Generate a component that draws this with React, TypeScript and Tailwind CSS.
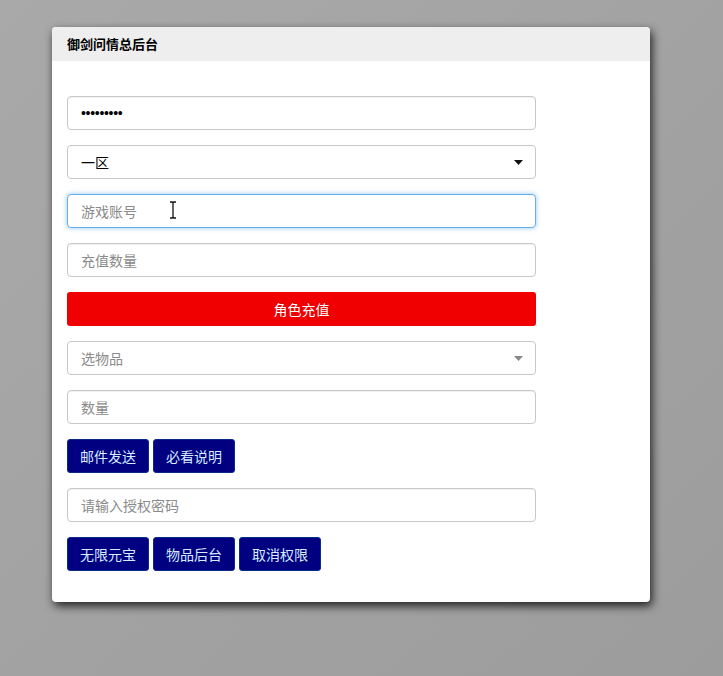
import React from 'react';

const font = { fontFamily: '"Noto Sans CJK SC", "Noto Sans", sans-serif' };

function Field({ placeholder, value, focused }: { placeholder?: string; value?: string; focused?: boolean }) {
  return (
    <div
      className={
        'h-[34px] w-full rounded-[4px] border bg-white px-[13px] flex items-center text-[14px] ' +
        (focused
          ? 'border-[#66afe9] shadow-[0_0_5px_rgba(102,175,233,0.7)]'
          : 'border-[#c8c8c8] shadow-[inset_0_1px_1px_rgba(0,0,0,0.06)]')
      }
    >
      {value ? (
        <span className="text-black font-['Liberation_Sans'] text-[14px] tracking-[-0.3px]">{value}</span>
      ) : (
        <span className="text-[#8a8a8a]">{placeholder}</span>
      )}
    </div>
  );
}

function Select({ label, muted }: { label: string; muted?: boolean }) {
  return (
    <div className="h-[34px] w-full rounded-[4px] border border-[#c8c8c8] bg-white pl-[13px] pr-[12px] flex items-center justify-between text-[14px]">
      <span className={muted ? 'text-[#8a8a8a]' : 'text-black'}>{label}</span>
      <svg width="9" height="5" viewBox="0 0 9 5">
        <path d="M0 0h9L4.5 5z" fill={muted ? '#888' : '#111'} />
      </svg>
    </div>
  );
}

function NavyButton({ children }: { children: React.ReactNode }) {
  return (
    <button className="h-[34px] w-[82px] rounded-[3px] border border-[#0a2a8a] bg-[#000080] text-[14px] text-[#d6ecff]">
      {children}
    </button>
  );
}

export default function App() {
  return (
    <div
      className="min-h-[676px] w-full bg-gradient-to-br from-[#a9a9a9] to-[#9c9c9c] pl-[52px] pt-[27px] pb-[74px]"
      style={font}
    >
      <div className="w-[598px] overflow-hidden rounded-[4px] bg-white shadow-[2px_4px_10px_rgba(0,0,0,0.8)]">
        <div className="h-[34px] bg-[#eeeeee] px-[15px] flex items-center">
          <span className="text-[13px] font-bold text-black">御剑问情总后台</span>
        </div>
        <div className="pl-[15px] pt-[35px] pb-[31px]">
          <div className="flex w-[469px] flex-col gap-[15px]">
            <Field value="•••••••••" />
            <Select label="一区" />
            <div className="relative">
              <Field placeholder="游戏账号" focused />
              <svg className="absolute left-[102px] top-[7px]" width="8" height="18" viewBox="0 0 8 18">
                <path d="M1 1h2.2L4 2l.8-1H7M4 2v14M1 17h2.2L4 16l.8 1H7" stroke="#111" strokeWidth="1.3" fill="none" />
              </svg>
            </div>
            <Field placeholder="充值数量" />
            <button className="h-[34px] w-full rounded-[3px] bg-[#f00000] text-[14px] text-white">角色充值</button>
            <Select label="选物品" muted />
            <Field placeholder="数量" />
            <div className="flex gap-[4px]">
              <NavyButton>邮件发送</NavyButton>
              <NavyButton>必看说明</NavyButton>
            </div>
            <Field placeholder="请输入授权密码" />
            <div className="flex gap-[4px]">
              <NavyButton>无限元宝</NavyButton>
              <NavyButton>物品后台</NavyButton>
              <NavyButton>取消权限</NavyButton>
            </div>
          </div>
        </div>
      </div>
    </div>
  );
}
